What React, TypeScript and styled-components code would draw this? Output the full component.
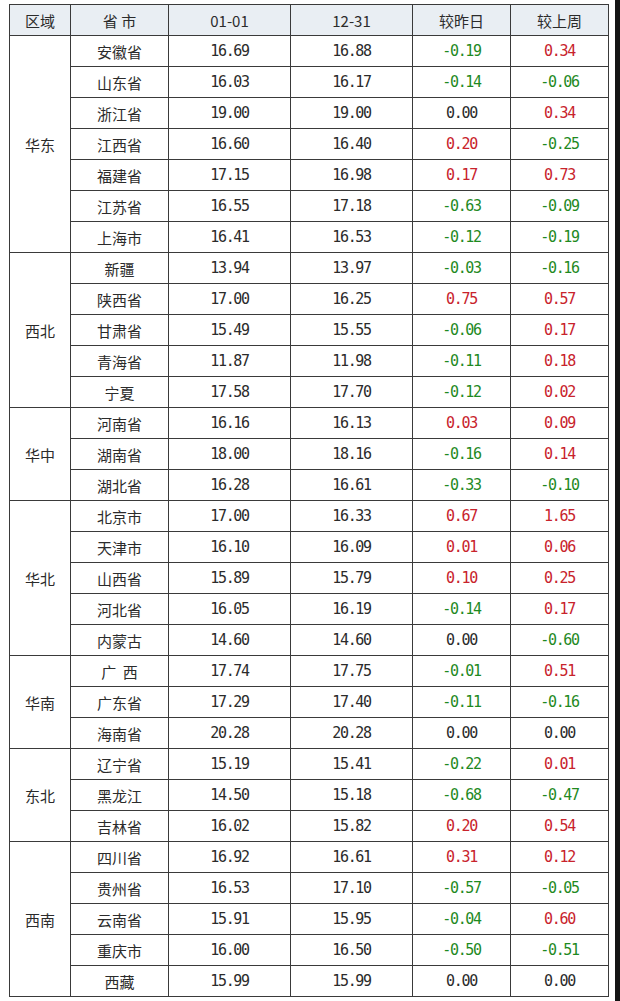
import styled, { createGlobalStyle } from 'styled-components'

const GlobalStyle = createGlobalStyle`
  html, body {
    margin: 0;
    padding: 0;
    background: #ffffff;
  }
`

type Row = [string, string, string, string, string]

const groups: { region: string; rows: Row[] }[] = [
  {
    region: '华东',
    rows: [
      ['安徽省', '16.69', '16.88', '-0.19', '0.34'],
      ['山东省', '16.03', '16.17', '-0.14', '-0.06'],
      ['浙江省', '19.00', '19.00', '0.00', '0.34'],
      ['江西省', '16.60', '16.40', '0.20', '-0.25'],
      ['福建省', '17.15', '16.98', '0.17', '0.73'],
      ['江苏省', '16.55', '17.18', '-0.63', '-0.09'],
      ['上海市', '16.41', '16.53', '-0.12', '-0.19'],
    ],
  },
  {
    region: '西北',
    rows: [
      ['新疆', '13.94', '13.97', '-0.03', '-0.16'],
      ['陕西省', '17.00', '16.25', '0.75', '0.57'],
      ['甘肃省', '15.49', '15.55', '-0.06', '0.17'],
      ['青海省', '11.87', '11.98', '-0.11', '0.18'],
      ['宁夏', '17.58', '17.70', '-0.12', '0.02'],
    ],
  },
  {
    region: '华中',
    rows: [
      ['河南省', '16.16', '16.13', '0.03', '0.09'],
      ['湖南省', '18.00', '18.16', '-0.16', '0.14'],
      ['湖北省', '16.28', '16.61', '-0.33', '-0.10'],
    ],
  },
  {
    region: '华北',
    rows: [
      ['北京市', '17.00', '16.33', '0.67', '1.65'],
      ['天津市', '16.10', '16.09', '0.01', '0.06'],
      ['山西省', '15.89', '15.79', '0.10', '0.25'],
      ['河北省', '16.05', '16.19', '-0.14', '0.17'],
      ['内蒙古', '14.60', '14.60', '0.00', '-0.60'],
    ],
  },
  {
    region: '华南',
    rows: [
      ['广\u00a0\u00a0西', '17.74', '17.75', '-0.01', '0.51'],
      ['广东省', '17.29', '17.40', '-0.11', '-0.16'],
      ['海南省', '20.28', '20.28', '0.00', '0.00'],
    ],
  },
  {
    region: '东北',
    rows: [
      ['辽宁省', '15.19', '15.41', '-0.22', '0.01'],
      ['黑龙江', '14.50', '15.18', '-0.68', '-0.47'],
      ['吉林省', '16.02', '15.82', '0.20', '0.54'],
    ],
  },
  {
    region: '西南',
    rows: [
      ['四川省', '16.92', '16.61', '0.31', '0.12'],
      ['贵州省', '16.53', '17.10', '-0.57', '-0.05'],
      ['云南省', '15.91', '15.95', '-0.04', '0.60'],
      ['重庆市', '16.00', '16.50', '-0.50', '-0.51'],
      ['西藏', '15.99', '15.99', '0.00', '0.00'],
    ],
  },
]

const Page = styled.div`
  display: flex;
  justify-content: space-between;
  width: 620px;
  height: 1001px;
  overflow: hidden;
`

const TableWrap = styled.div`
  padding: 4px 0 0 9px;
`

const EdgeStrip = styled.div`
  width: 5px;
  height: 100%;
  background: #141414;
`

const Table = styled.table`
  border-collapse: collapse;
  table-layout: fixed;
  width: 600px;
  font-family: 'Noto Sans CJK SC', 'Noto Sans', sans-serif;
  font-size: 15px;
  line-height: 1;
  color: #2b2b2b;
`

const HeadCell = styled.th<{ $w: number }>`
  width: ${(p) => p.$w}px;
  height: 30px;
  padding: 0;
  border: 1px solid #3a3a3a;
  background: #e9eef3;
  font-weight: 400;
  text-align: center;
  vertical-align: middle;
`

const Cell = styled.td`
  height: 30px;
  padding: 0;
  border: 1px solid #3a3a3a;
  text-align: center;
  vertical-align: middle;
  white-space: pre;
`

const NumCell = styled(Cell)<{ $tone?: 'up' | 'down' | 'flat' }>`
  font-family: 'DejaVu Sans Mono', 'Liberation Mono', monospace;
  font-size: 15px;
  letter-spacing: -1.3px;
  color: ${(p) =>
    p.$tone === 'up' ? '#c8232c' : p.$tone === 'down' ? '#1f8a1f' : '#2b2b2b'};
`

const toneOf = (v: string) => {
  const n = parseFloat(v)
  if (n > 0) return 'up'
  if (n < 0) return 'down'
  return 'flat'
}

function App() {
  return (
    <Page>
      <GlobalStyle />
      <TableWrap>
        <Table>
          <thead>
            <tr>
              <HeadCell $w={60}>区域</HeadCell>
              <HeadCell $w={97}>省 市</HeadCell>
              <HeadCell $w={121}>01-01</HeadCell>
              <HeadCell $w={121}>12-31</HeadCell>
              <HeadCell $w={97}>较昨日</HeadCell>
              <HeadCell $w={97}>较上周</HeadCell>
            </tr>
          </thead>
          <tbody>
            {groups.map((g) =>
              g.rows.map((r, i) => (
                <tr key={g.region + r[0]}>
                  {i === 0 && <Cell rowSpan={g.rows.length}>{g.region}</Cell>}
                  <Cell>{r[0]}</Cell>
                  <NumCell>{r[1]}</NumCell>
                  <NumCell>{r[2]}</NumCell>
                  <NumCell $tone={toneOf(r[3])}>{r[3]}</NumCell>
                  <NumCell $tone={toneOf(r[4])}>{r[4]}</NumCell>
                </tr>
              ))
            )}
          </tbody>
        </Table>
      </TableWrap>
      <EdgeStrip />
    </Page>
  )
}

export default App
